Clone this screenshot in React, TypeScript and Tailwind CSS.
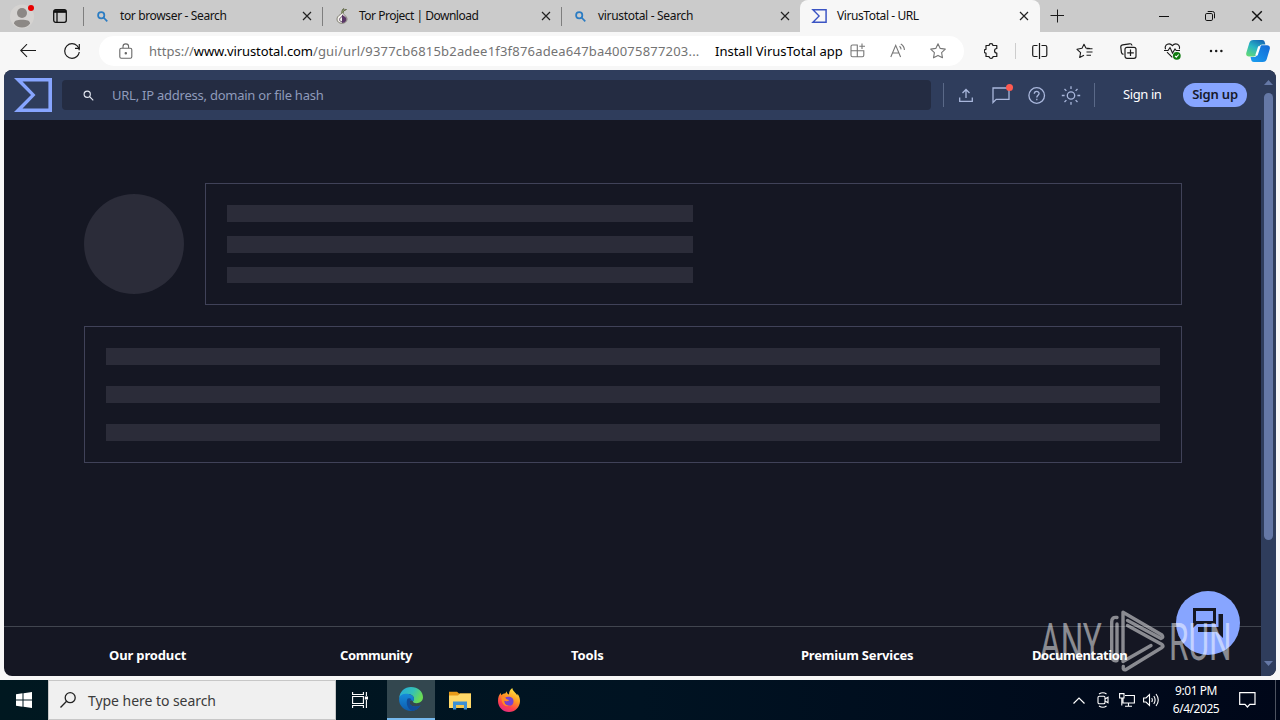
import React from 'react';

type IconProps = { className?: string };

const tabs = [
  { title: 'tor browser - Search', icon: 'search', tracking: 'tracking-[-0.36px]' },
  { title: 'Tor Project | Download', icon: 'tor', tracking: 'tracking-[-0.5px]' },
  { title: 'virustotal - Search', icon: 'search', tracking: 'tracking-[-0.32px]' },
  { title: 'VirusTotal - URL', icon: 'vt', tracking: 'tracking-[-0.41px]' },
];

const footerLinks = [
  { label: 'Our product', box: 'w-[231px] tracking-[-0.15px]' },
  { label: 'Community', box: 'w-[231px] tracking-[-0.4px]' },
  { label: 'Tools', box: 'w-[230px] tracking-[-0.1px]' },
  { label: 'Premium Services', box: 'w-[231px] tracking-[-0.2px]' },
  { label: 'Documentation', box: 'w-[120px] tracking-[-0.45px]' },
];

const VtLogo = ({ className }: IconProps) => (
  <svg viewBox="0 0 38 34" className={className} fill="currentColor">
    <path fillRule="evenodd" d="M0 0H38V34H0L17 17ZM8.5 3.6L21.5 17L8.5 30.4H34.4V3.6Z" />
  </svg>
);

const SearchGlyph = ({ className }: IconProps) => (
  <svg viewBox="0 0 12 12" className={className} fill="none" stroke="currentColor">
    <circle cx="4.6" cy="4.6" r="3.4" />
    <path d="M7.1 7.1L11.2 11.2" />
  </svg>
);

const TorIcon = () => (
  <svg viewBox="0 0 12 16" className="h-4 w-3">
    <path d="M7.5 0.5C6 2 5.8 3.5 6 5.2C4 7 1 8 1 11C1 13.8 3.2 15.3 6 15.3C8.8 15.3 11 13.6 11 11C11 8.4 8 7.4 7.2 5.2C7 3.5 8 2.2 10.5 1.5C9 1.3 8 1.7 7.2 2.6Z" fill="#f4f2ed" stroke="#5b5a4a" strokeWidth="0.7" />
    <path d="M6 6.5C9 9 10.5 9 10.5 11.2C10.5 13.4 8.5 14.9 6 14.9Z" fill="#593766" />
    <path d="M6 8.5C4.3 9.7 3.6 10.3 3.6 11.6C3.6 12.8 4.5 13.6 6 13.8" fill="none" stroke="#68546e" />
    <path d="M6 5.3C6 3 6.5 1.8 7.7 0.7M7 4.6C7.5 3 8.6 2 10.3 1.6" fill="none" stroke="#5e7039" />
  </svg>
);

const Close = ({ className }: IconProps) => (
  <svg viewBox="0 0 10 10" className={className} fill="none" stroke="currentColor" strokeWidth="1.2">
    <path d="M1 1L9 9M9 1L1 9" />
  </svg>
);

const TabIcon = ({ name }: { name: string }) => {
  if (name === 'tor') return <TorIcon />;
  if (name === 'vt') return <VtLogo className="h-[14px] w-4 text-[#3b54c4]" />;
  return <SearchGlyph className="h-[11px] w-[11px] text-[#2b7cc3] stroke-[1.9]" />;
};

const TabBar = () => (
  <div className="flex h-8 bg-[#cbcbcb]">
    <div className="flex w-[83px] items-center rounded-br-sm">
      <svg viewBox="0 0 26 28" className="ml-[9px] h-7 w-[26px]">
        <circle cx="13" cy="14.5" r="12" fill="#d5d3d1" />
        <circle cx="13" cy="11" r="5" fill="#8c8885" />
        <path d="M5 21.5C5 18.6 8 17.8 13 17.8C18 17.8 21 18.6 21 21.5C19.4 24.4 16.5 25.4 13 25.4C9.5 25.4 6.6 24.4 5 21.5Z" fill="#8c8885" />
        <circle cx="22" cy="6" r="3" fill="#e80000" />
      </svg>
      <svg viewBox="0 0 14 14" className="ml-[18px] h-[14px] w-[14px]" fill="none" stroke="#111" strokeWidth="1.3">
        <rect x="0.7" y="0.7" width="12.6" height="12.6" rx="2" />
        <path d="M1 3H13M4 3V13" />
        <path d="M1 2.2H13" strokeWidth="2.2" />
      </svg>
    </div>
    {tabs.map((tab, idx) => {
      const active = idx === 3;
      return (
        <div
          key={tab.title}
          className={
            active
              ? 'flex h-8 w-[240px] items-center rounded-t-lg bg-[#f7f7f7]'
              : 'flex h-8 w-[239px] items-center'
          }
        >
          <div className={active ? 'h-5 w-px' : 'h-[19px] w-px bg-[#7e7e7e]'} />
          <div className={active ? 'ml-[10px] flex w-[26px]' : 'ml-[13px] flex w-[23px]'}>
            <TabIcon name={tab.icon} />
          </div>
          <span className={`w-[181px] whitespace-nowrap text-[12px] leading-8 text-[#111] ${tab.tracking}`}>{tab.title}</span>
          <Close className="ml-[1px] h-[10px] w-[10px] text-[#222]" />
        </div>
      );
    })}
    <svg viewBox="0 0 14 14" className="mt-[9px] ml-[10px] h-[14px] w-[14px]" stroke="#1a1a1a">
      <path d="M7.5 0.5V13.5M0.5 6.5H14" />
    </svg>
    <svg viewBox="0 0 10 10" className="mt-[11px] ml-[95px] h-[10px] w-[10px]" stroke="#111">
      <path d="M0 5.5H10" />
    </svg>
    <svg viewBox="0 0 10 10" className="mt-[11px] ml-9 h-[10px] w-[10px]" fill="none" stroke="#111">
      <rect x="0.5" y="2.5" width="7" height="7" rx="1.3" />
      <path d="M2.7 0.5H7.5Q9.5 0.5 9.5 2.5V7.3" />
    </svg>
    <Close className="mt-[10px] ml-9 h-3 w-3 text-[#111]" />
  </div>
);

const Toolbar = () => (
  <div className="flex h-[38px] items-center bg-[#f7f7f7] text-[#1b1b1b]">
    <svg viewBox="0 0 16 14" className="ml-5 h-[14px] w-4" fill="none" stroke="currentColor" strokeWidth="1.1">
      <path d="M16 6.5H0.8M7 0.2L0.7 6.5L7 12.8" />
    </svg>
    <svg viewBox="0 0 16 16" className="ml-7 h-4 w-4" fill="none" stroke="currentColor" strokeWidth="1.2">
      <path d="M15.3 7.3C15 3.5 11.9 0.7 8 0.7C4 0.7 0.7 4 0.7 8C0.7 12 4 15.3 8 15.3C11.7 15.3 14.8 12.6 15.3 9" />
      <path d="M15.3 1V5.3H11" />
    </svg>
    <div className="ml-[19px] flex h-[30px] w-[865px] items-center rounded-full bg-white">
      <svg viewBox="0 0 14 16" className="ml-5 h-4 w-[14px]" fill="none" stroke="#686868" strokeWidth="1.1">
        <rect x="0.8" y="5.3" width="12" height="10" rx="1.5" />
        <path d="M4 5V3.5C4 0 9.6 0 9.6 3.5V5" />
        <circle cx="6.8" cy="10.3" r="0.7" fill="#686868" />
      </svg>
      <div className="ml-4 w-[566px] whitespace-nowrap text-[13px] leading-[30px] tracking-[0.2px] text-[#737373]">
        <span className="tracking-[0px]">https://</span>
        <span className="tracking-[-0.1px] text-black">www.virustotal.com</span>/gui/url/9377cb6815b2adee1f3f876adea647ba40075877203...
      </div>
      <div className="w-[135px] whitespace-nowrap text-[13px] leading-[30px] text-black">Install VirusTotal app</div>
      <svg viewBox="0 0 16 16" className="h-4 w-4" fill="none" stroke="#777" strokeWidth="1.1">
        <path d="M1 7.5V3.5Q1 2 2.5 2H7.3V13.8H2.5Q1 13.8 1 12.3V7.8H13.8V12.3Q13.8 13.8 12.3 13.8H7.3M12 0.5V6M9.3 3.2H15" />
      </svg>
      <svg viewBox="0 0 16 16" className="ml-6 h-4 w-4" fill="none" stroke="#777" strokeWidth="1.1">
        <path d="M0.8 14L5.7 2.3L10.6 14M2.5 10H9M9.5 3.2Q11 4.4 11.1 6.4M10.8 1Q14.4 3.2 14.4 7" />
      </svg>
      <svg viewBox="0 0 16 16" className="ml-6 h-4 w-4" fill="none" stroke="#777" strokeWidth="1.1" strokeLinejoin="round">
        <path d="M8 0.8L10.2 5.4L15.3 6.1L11.6 9.6L12.5 14.8L8 12.4L3.5 14.8L4.4 9.6L0.7 6.1L5.8 5.4Z" />
      </svg>
    </div>
    <svg viewBox="0 0 16 16" className="ml-5 h-4 w-4" fill="none" stroke="currentColor" strokeWidth="1.2">
      <path d="M2 2.5H5.1C5.1 0.1 8.9 0.1 8.9 2.5H12.8V5.5C9.8 5.5 9.8 10.1 12.8 10.1V13.5H9C9 16 5.1 16 5.1 13.5H2V10C-0.4 10 -0.4 6.3 2 6.3Z" strokeLinejoin="round" />
    </svg>
    <div className="ml-[15px] h-4 w-px bg-[#cdcdcd]" />
    <svg viewBox="0 0 16 16" className="ml-4 h-4 w-4" fill="none" stroke="currentColor" strokeWidth="1.2">
      <path d="M5.5 2.5H2.2Q0.7 2.5 0.7 4V12Q0.7 13.5 2.2 13.5H5.5M9.5 2.5H13.3Q14.8 2.5 14.8 4V12Q14.8 13.5 13.3 13.5H9.5M7.5 0V16" />
    </svg>
    <svg viewBox="0 0 17 16" className="ml-7 h-4 w-[17px]" fill="none" stroke="currentColor" strokeWidth="1.1" strokeLinejoin="round">
      <path d="M14 5.6L9.9 5L8 1.2L6 5.3L1 6.3L4.6 9.6L3.7 14.5L8 12.2M10.5 5.7H16.5M10.5 9H16.5M10.5 12.3H15" />
    </svg>
    <svg viewBox="0 0 17 16" className="ml-[27px] h-4 w-[17px]" fill="none" stroke="currentColor" strokeWidth="1.2">
      <path d="M3.5 11.3C2 11 1.6 10.5 1.4 9.3L0.8 4.3C0.6 2.7 1.4 2 2.6 1.8L9.5 0.8C11 0.6 11.8 1.2 12 2.5" />
      <rect x="5" y="4.3" width="11" height="11" rx="2" />
      <path d="M10.5 6.5V13M7.2 9.8H13.8" />
    </svg>
    <svg viewBox="0 0 18 17" className="ml-[27px] h-[17px] w-[18px]" fill="none" stroke="currentColor" strokeWidth="1.1">
      <path d="M1.5 6.2C0.3 2.7 3 0.9 5.2 0.9C7 0.9 8.4 2.6 8.4 2.6C8.4 2.6 9.8 0.9 11.7 0.9C14.2 0.9 16.4 2.9 15.3 6.2M3 9.2L8.3 14.4M0 7.5H4L6 4.6L8.5 10L11 6L12.2 7.5H16" />
      <circle cx="12.8" cy="12.8" r="3.9" fill="#107c10" stroke="none" />
      <path d="M11 12.8L12.3 14.1L14.7 11.5" stroke="white" />
    </svg>
    <svg viewBox="0 0 16 4" className="ml-[26px] h-1 w-4" fill="currentColor">
      <circle cx="3" cy="2" r="1.25" />
      <circle cx="8.2" cy="2" r="1.25" />
      <circle cx="13.4" cy="2" r="1.25" />
    </svg>
    <svg viewBox="0 0 24 22" className="ml-[22px] h-[22px] w-6">
      <defs>
        <linearGradient id="cpA" x1="0.8" y1="0" x2="0.2" y2="1">
          <stop offset="0" stopColor="#1566b4" />
          <stop offset="0.5" stopColor="#28b5c5" />
          <stop offset="1" stopColor="#60d879" />
        </linearGradient>
        <linearGradient id="cpB" x1="1" y1="0" x2="0" y2="1">
          <stop offset="0" stopColor="#1468d6" />
          <stop offset="1" stopColor="#1aa0f0" />
        </linearGradient>
      </defs>
      <path d="M7.5 0H16C18 0 18.6 1.3 19 3L19.4 4.5H16.5C14.7 4.5 13.8 5.2 13.2 7L10.5 14.5C10 16 9 16.4 7.5 16.4H3C0.5 16.4 -0.3 14.7 0.4 12.5L3.3 3C4 1 5 0 7.5 0Z" fill="url(#cpA)" />
      <path d="M16.7 22H8C6 22 5.4 20.8 5 19L4.6 17H7.5C9.7 17 10.5 16.5 11.1 14.7L13.6 7.5C14.2 5.8 15 5.3 16.7 5.3H21C23.4 5.3 24.4 7 23.7 9.2L20.8 19C20.2 21 19.2 22 16.7 22Z" fill="url(#cpB)" />
      <path d="M12.2 6.3L9.2 15.6H11.6L14.7 6.3Z" fill="white" />
    </svg>
  </div>
);

const Header = () => (
  <div className="flex h-[50px] items-center bg-[#2f3d5c] text-[#a9b7dc]">
    <VtLogo className="ml-[10px] h-[34px] w-[38px] text-[#87a5ff]" />
    <div className="ml-[10px] flex h-[30px] w-[869px] items-center rounded bg-[#242c42]">
      <SearchGlyph className="mt-[1px] ml-[21px] h-[11px] w-[11px] text-[#e4e8f2] stroke-[1.2]" />
      <span className="ml-[18px] whitespace-nowrap text-[13px] leading-[30px] tracking-[-0.24px] text-[#8f9bbb]">
        URL, IP address, domain or file hash
      </span>
    </div>
    <div className="ml-3 h-6 w-px bg-[#5a6988]" />
    <svg viewBox="0 0 14 16" className="ml-[15px] h-4 w-[14px]" fill="none" stroke="currentColor" strokeWidth="1.3">
      <path d="M7 11V2.5M3.5 6L7 2.5L10.5 6M0.7 10.5V14.3H13.3V10.5" />
    </svg>
    <div className="relative ml-[19px] h-[18px] w-[18px]">
      <svg viewBox="0 0 18 18" className="h-[18px] w-[18px]" fill="none" stroke="currentColor" strokeWidth="1.3">
        <path d="M1 16.5V2H17V13.3H4.2Z" />
      </svg>
      <div className="absolute -top-[2px] left-[14px] h-[7px] w-[7px] rounded-full bg-[#ff5a50]" />
    </div>
    <svg viewBox="0 0 18 18" className="ml-[18px] h-[18px] w-[18px]" fill="none" stroke="currentColor" strokeWidth="1.3">
      <circle cx="8.7" cy="9.5" r="7.8" />
      <path d="M6.3 7.8C6.3 4.6 11.1 4.7 11.1 7.5C11.1 9.2 8.8 9.3 8.8 11.5M8.8 12.7V14.2" />
    </svg>
    <svg viewBox="0 0 20 20" className="ml-[15px] h-5 w-5" fill="none" stroke="currentColor" strokeWidth="1.3">
      <circle cx="10" cy="10.5" r="3.7" />
      <path d="M10 1.3V4.1M10 16.9V19.7M0.8 10.5H3.6M16.4 10.5H19.2M3.5 4L5.4 5.9M14.6 15.1L16.5 17M3.5 17L5.4 15.1M14.6 5.9L16.5 4" />
    </svg>
    <div className="ml-[13px] h-6 w-px bg-[#5a6988]" />
    <span className="ml-[28px] w-[60px] whitespace-nowrap text-[13px] tracking-[-0.4px] text-white">Sign in</span>
    <div className="flex h-6 w-16 items-center justify-center rounded-full bg-[#87a5ff] text-[13px] font-semibold tracking-[-0.2px] whitespace-nowrap text-[#16192b]">
      Sign up
    </div>
  </div>
);

const Skeleton = () => (
  <div className="flex h-[506px] flex-col pt-[63px] pl-20">
    <div className="flex gap-[21px]">
      <div className="mt-[11px] h-[100px] w-[100px] rounded-full bg-[#2b2c39]" />
      <div className="flex h-[122px] w-[977px] flex-col gap-[14px] border border-[#404258] pt-[21px] pl-[21px]">
        <div className="h-[17px] w-[466px] bg-[#2b2c39]" />
        <div className="h-[17px] w-[466px] bg-[#2b2c39]" />
        <div className="h-[16px] w-[466px] bg-[#2b2c39]" />
      </div>
    </div>
    <div className="mt-[21px] flex h-[137px] w-[1098px] flex-col gap-[21px] border border-[#404258] px-[21px] pt-[21px]">
      <div className="h-[17px] bg-[#2b2c39]" />
      <div className="h-[17px] bg-[#2b2c39]" />
      <div className="h-[17px] bg-[#2b2c39]" />
    </div>
  </div>
);

const PageFooter = () => (
  <div className="flex h-[50px] border-t border-[#41454f] pl-[105px] text-[13px] leading-[56px] font-bold text-white">
    {footerLinks.map((link) => (
      <div key={link.label} className={`whitespace-nowrap ${link.box}`}>{link.label}</div>
    ))}
  </div>
);

const Scrollbar = () => (
  <div className="flex w-[15px] flex-col items-center bg-[#2f3d5c]">
    <svg viewBox="0 0 9 5" className="mt-[10px] h-[5px] w-[9px]" fill="#6578a6"><path d="M0 5L4.5 0L9 5Z" /></svg>
    <div className="mt-[8px] h-[447px] w-[9px] rounded-full bg-[#6578a6]" />
    <svg viewBox="0 0 9 5" className="mt-auto mb-[10px] h-[5px] w-[9px]" fill="#6578a6"><path d="M0 0H9L4.5 5Z" /></svg>
  </div>
);

const Watermark = () => (
  <div className="absolute top-[610px] left-[1040px] flex h-[62px] w-[192px] items-center font-['Roboto'] text-[51px] leading-none font-normal text-white/50">
    <div className="w-[69px] pt-[2px]">
      <span className="inline-block origin-left scale-x-[0.62]">ANY</span>
    </div>
    <svg viewBox="0 0 56 62" className="h-[62px] w-14 shrink-0" fill="none" stroke="currentColor" strokeWidth="3.4" strokeLinejoin="round" strokeLinecap="round">
      <path d="M8 7.5Q2.7 6.5 2.7 12V45Q2.7 52 8 50.5M8 14V50.5M14 36V2.3L53 25Q55 27.5 52 28.5L18.5 10.5M18.5 15.5L53 34.5Q55 36.5 53 37.5L17 59.5Q13.7 60.5 14.3 56.5M14 36V51.5L42 35.5" />
    </svg>
    <div className="pt-[2px] pl-[4px]">
      <span className="inline-block origin-left scale-x-[0.62]">RUN</span>
    </div>
  </div>
);

const EdgeIcon = () => (
  <svg viewBox="0 0 24 24" className="h-6 w-6">
    <defs>
      <linearGradient id="edA" x1="0" y1="0" x2="1" y2="0.4">
        <stop offset="0" stopColor="#23a8df" />
        <stop offset="0.6" stopColor="#35c1b5" />
        <stop offset="1" stopColor="#69db55" />
      </linearGradient>
      <linearGradient id="edB" x1="0" y1="0" x2="0" y2="1">
        <stop offset="0" stopColor="#168bdb" />
        <stop offset="1" stopColor="#0e5cad" />
      </linearGradient>
    </defs>
    <path d="M0.2 11C0.7 4.5 5.7 0 12 0C19 0 24 4.8 24 10.3C24 14 21 16.2 17.5 16.2C15.2 16.2 14 15.3 14 14.5C14 13.8 15 13.5 15 11.8C15 8 10.3 6.2 6.5 7.3C3.7 8 1.5 9.3 0.2 11Z" fill="url(#edA)" />
    <path d="M0.1 12C0.5 8 4 6.7 7.3 6.7C11.5 6.7 15 8.8 15 12C15 13.5 14 13.8 14 14.6C12.5 12.5 10.5 13 10.5 15.5C10.5 19.5 17 21 21.6 18.2C19 22 16 24 12 24C5 24 -0.2 18.4 0.1 12Z" fill="url(#edB)" />
    <path d="M8.3 12C6.5 17 9 22.5 13.5 23.9C17.5 23.6 20 21.2 21.6 18.2C17 20.8 10.8 19.5 10.8 15.5C10.8 13.5 12 12.5 12.5 12.2C11.5 11.2 9 11 8.3 12Z" fill="#124c98" />
  </svg>
);

const FolderIcon = () => (
  <svg viewBox="0 0 22 19" className="h-[19px] w-[22px]">
    <path d="M0 0.7H8L10 2.5H22V17H0Z" fill="#e89b19" />
    <path d="M0 4.5H9L11 2.5H22V17H0Z" fill="#ffd868" />
    <path d="M4 18.5V10.5H18V18.5H14.8V14H7.2V18.5Z" fill="#3c90d5" />
    <path d="M7.2 14H14.8V17H7.2Z" fill="#f6c74c" />
  </svg>
);

const FirefoxIcon = () => (
  <svg viewBox="0 0 24 24" className="h-6 w-6">
    <defs>
      <linearGradient id="ffA" x1="0.8" y1="0" x2="0.3" y2="1">
        <stop offset="0" stopColor="#fff044" />
        <stop offset="0.45" stopColor="#ff9422" />
        <stop offset="0.75" stopColor="#ff404c" />
        <stop offset="1" stopColor="#e32b83" />
      </linearGradient>
    </defs>
    <path d="M1 13C1 9.5 2 6.8 3.8 5L4.3 7.3C5.5 6 6.8 5.5 8.2 5.6L9.8 3.3C9.7 4.8 10.3 6 12 6.5C12 3.8 13.2 1.7 15.3 0C15.5 3 19 4.7 20.3 7.4L20.5 5.8C22.2 8.1 23 10.3 23 13C23 19.2 18 24 12 24C6 24 1 19.2 1 13Z" fill="url(#ffA)" />
    <path d="M8.2 9.6C10.5 8.2 16.5 8.4 16.5 13.2C16.5 16.7 14 18 11.8 17.8C8.6 17.5 7 15.4 7.2 12.5C9 13.5 10.5 13.4 12 12C10.2 11.8 8.5 11.2 8.2 9.6Z" fill="#7442d0" />
    <path d="M4.5 8.5C6 8.2 7.5 8.6 8.2 9.6C8.5 11.2 10.2 11.8 12 12C11 13.5 9 13.5 7.2 12.5C7 16 10 18.3 13 17.5C8 20 4 16 4.5 8.5Z" fill="#ff8b24" />
  </svg>
);

const Taskbar = () => (
  <div className="flex h-10 items-center bg-linear-to-r from-[#001820] via-[#001322] to-[#000719] text-white">
    <div className="flex w-12 justify-center">
      <svg viewBox="0 0 16 16" className="h-4 w-4" fill="white">
        <path d="M0 2.2L6.5 1.3V7.5H0ZM7.5 1.2L16 0V7.5H7.5ZM0 8.5H6.5V14.7L0 13.8ZM7.5 8.5H16V16L7.5 14.8Z" />
      </svg>
    </div>
    <div className="flex h-10 w-72 items-center border border-[#c7c7c7] bg-[#f0f0f0]">
      <svg viewBox="0 0 16 16" className="ml-[11px] h-4 w-4" fill="none" stroke="#222" strokeWidth="1.3">
        <circle cx="10.2" cy="5.7" r="5" />
        <path d="M6.6 9.3L0.5 15.5" />
      </svg>
      <span className="ml-3 text-[14px] tracking-[-0.05px] whitespace-nowrap text-[#3b3b3b]">Type here to search</span>
    </div>
    <svg viewBox="0 0 17 16" className="ml-4 h-4 w-[17px]" fill="none" stroke="white" strokeWidth="1.1">
      <path d="M0.6 0V2.5H11.4V0M0.6 16V13.5H11.4V16M0.6 4.5H11.4V11.5H0.6ZM14.4 0V4M14.4 8V16" />
      <path d="M12.8 4.5H16V7.5H12.8Z" fill="white" stroke="none" />
    </svg>
    <div className="ml-[18px] flex h-10 w-12 items-center justify-center border-b-2 border-[#76b9ed] bg-[#33474f]">
      <EdgeIcon />
    </div>
    <div className="ml-[14px]"><FolderIcon /></div>
    <div className="ml-[26px]"><FirefoxIcon /></div>
    <div className="ml-auto flex items-center">
      <svg viewBox="0 0 12 7" className="h-[7px] w-3" fill="none" stroke="white" strokeWidth="1.2"><path d="M0.5 6.5L6 1L11.5 6.5" /></svg>
      <svg viewBox="0 0 12 16" className="ml-3 h-4 w-3" fill="none" stroke="white" strokeWidth="1.1">
        <rect x="1" y="4.3" width="7" height="7.4" rx="1.3" />
        <path d="M8 7L11 5.2V10.8L8 9M2 2Q6 -0.6 9.5 2M2 14Q6 16.6 9.5 14" />
      </svg>
      <svg viewBox="0 0 16 14" className="ml-[10px] h-[14px] w-4" fill="none" stroke="white" strokeWidth="1.1">
        <path d="M6 2.5H15.4V10H4V5.5M9.5 10V13M6 13.3H13M0.6 0.6H5V5H0.6ZM2.8 5V12.5" />
      </svg>
      <svg viewBox="0 0 17 14" className="ml-2 h-[14px] w-[17px]" fill="none" stroke="white" strokeWidth="1.1">
        <path d="M0.6 5H3L6.5 1.5V12.5L3 9H0.6ZM8.7 5Q10 7 8.7 9M10.8 3Q13.4 7 10.8 11M13 1Q17.5 7 13 13" />
      </svg>
      <div className="ml-[9px] w-[54px] text-center text-[12px] leading-[18px] tracking-[-0.45px] whitespace-nowrap">
        <div>9:01 PM</div>
        <div>6/4/2025</div>
      </div>
      <svg viewBox="0 0 17 16" className="ml-4 h-4 w-[17px]" fill="none" stroke="white" strokeWidth="1.2">
        <path d="M0.7 0.7H16V12.3H10.8L8.4 15L6 12.3H0.7Z" />
      </svg>
      <div className="mr-1 ml-[19px] h-10 w-px bg-[#4d5360]" />
    </div>
  </div>
);

export default function App() {
  return (
    <div className="relative h-[720px] w-[1280px] overflow-hidden bg-[#f7f7f7] font-['Noto_Sans','Open_Sans',sans-serif]">
      <TabBar />
      <Toolbar />
      <div className="mx-1 mb-1 flex h-[606px] overflow-hidden rounded-lg bg-[#151723]">
        <div className="w-[1257px]">
          <Header />
          <Skeleton />
          <PageFooter />
        </div>
        <Scrollbar />
      </div>
      <div className="absolute top-[591px] left-[1176px] flex h-16 w-16 items-center justify-center rounded-full bg-[#87a5ff]">
        <svg viewBox="0 0 30 30" className="h-[30px] w-[30px]" fill="#151723">
          <path fillRule="evenodd" d="M0 0H23V16H4L0 20ZM3 3V13H20V3Z" />
          <path d="M25.5 6H30V30L24 24H5V19H25.5Z" />
        </svg>
      </div>
      <Watermark />
      <Taskbar />
    </div>
  );
}
